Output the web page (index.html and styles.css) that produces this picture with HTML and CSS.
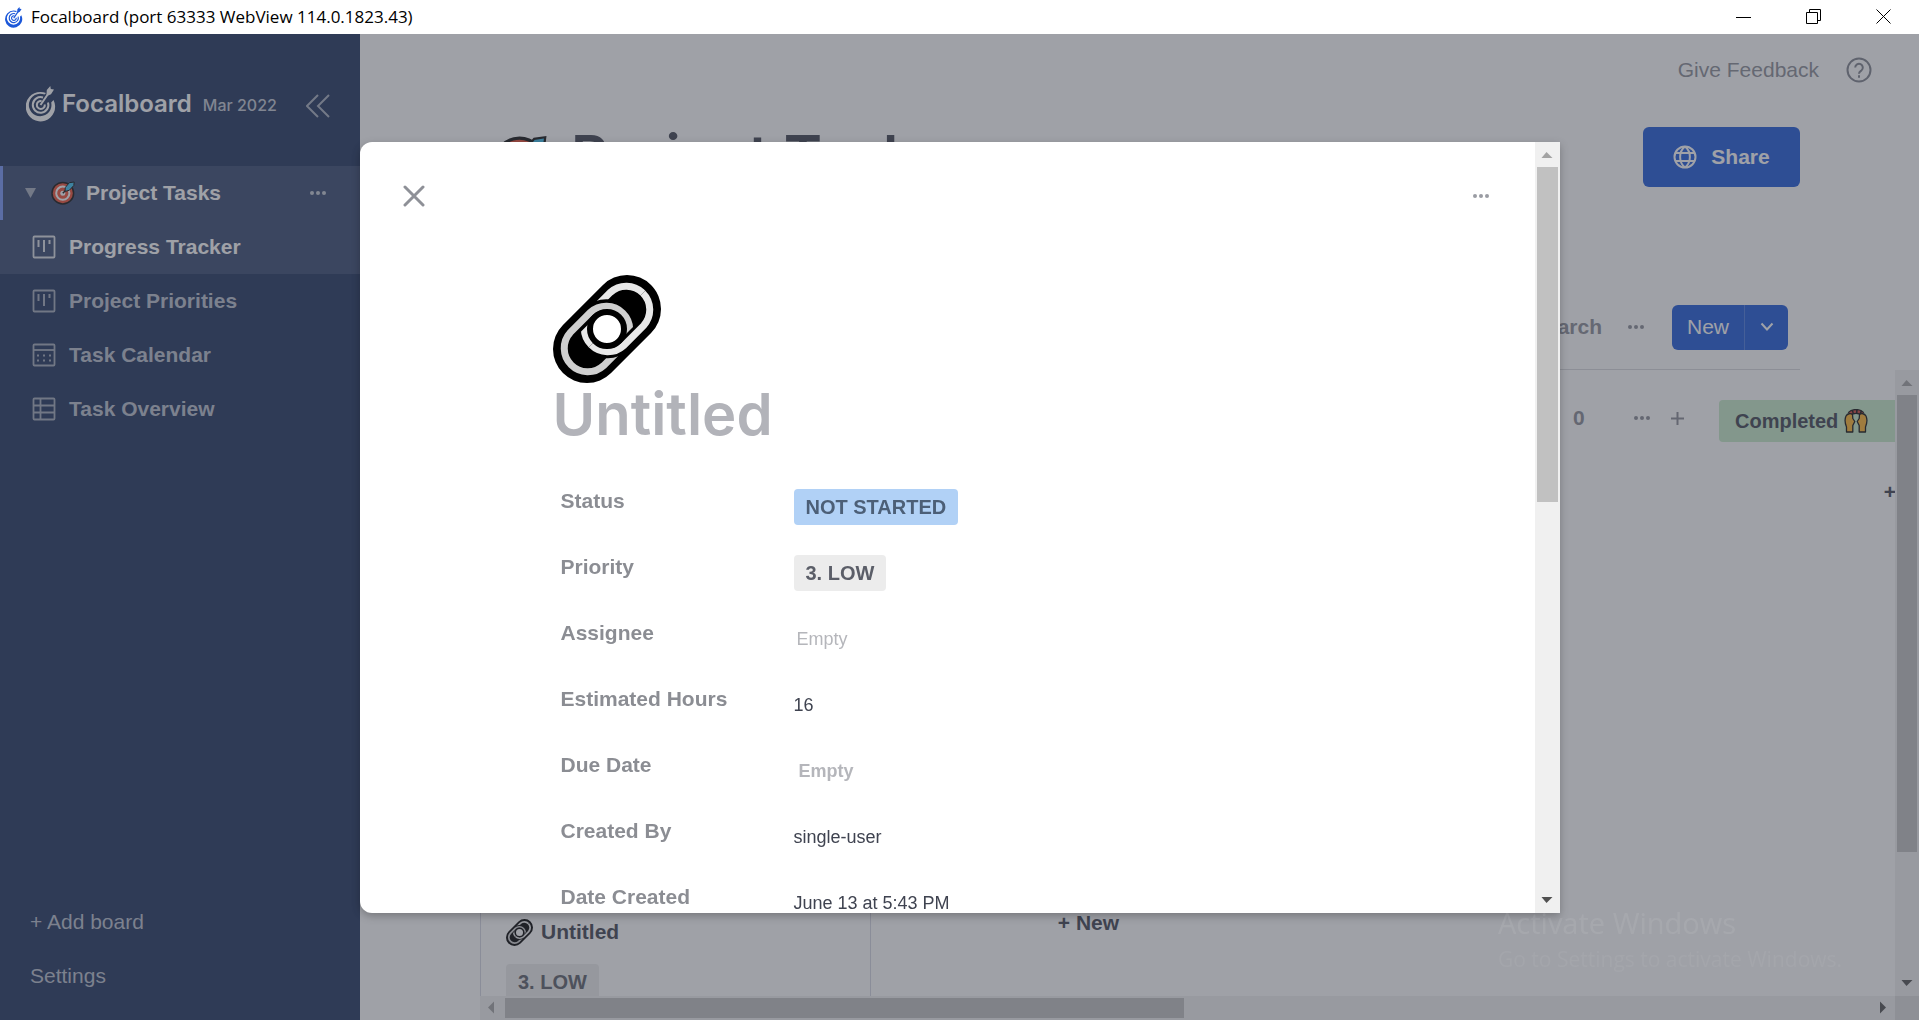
FILE: index.html
```html
<!DOCTYPE html>
<html lang="en">
<head>
<meta charset="utf-8">
<title>Focalboard</title>
<link rel="stylesheet" href="styles.css">
</head>
<body>
<svg class="sprite" aria-hidden="true">
  <defs>
    <symbol id="goal" viewBox="0 0 30 36">
      <path fill="currentColor" fill-rule="evenodd" d="M14.500 6A14.700 14.700 0 1 0 27.500 14L25.200 16.500A11.300 11.300 0 1 1 18.500 8.500L20 7A14.700 14.700 0 0 0 14.500 6z"/>
      <path fill="none" stroke="currentColor" stroke-width="2" d="M17 11.500A7.800 7.800 0 1 0 22 16.500"/>
      <path fill="none" stroke="currentColor" stroke-width="2" d="M15.500 15A4 4 0 1 0 18.800 18.500M14.500 19 22 8"/>
      <path fill="currentColor" d="M20.500 8.500 20.800 4 24.300 0 24.800 3 28 3.500 25 8.200 21.500 9.800z"/>
    </symbol>
    <symbol id="target" viewBox="0 0 24 24">
      <circle cx="11.800" cy="12.200" r="10.800" fill="#ee4f35" stroke="#111" stroke-width="1.500"/>
      <circle cx="11.800" cy="12.200" r="6.600" fill="none" stroke="#fff" stroke-width="2"/>
      <circle cx="11.800" cy="12.200" r="2.500" fill="#fff"/>
      <path d="M11.800 12.200 17 7" stroke="#111" stroke-width="1.500"/>
      <path fill="#3cc0f0" stroke="#111" stroke-width="1" d="M14 9.800 14.300 6.500l4-4.800L23.200 1l-.4 3.500-4.500 4.800-3.300.9z"/>
    </symbol>
    <symbol id="chain" viewBox="0 0 108 108">
      <clipPath id="lower"><path d="M108 0V108H0z"/></clipPath>
      <path d="M34 74 74 34" stroke="#000" stroke-width="68" stroke-linecap="round"/>
      <path id="link" fill="none" stroke="#e8e8e8" stroke-width="7" d="M37.400 37.400 57.400 17.400A23.500 23.500 0 0 1 90.600 50.600L70.600 70.600A23.500 23.500 0 0 1 37.400 37.400z"/>
      <path fill="none" stroke="#000" stroke-width="14" d="M70.600 70.600 50.600 90.600A23.500 23.500 0 0 1 17.400 57.400L37.400 37.400A23.500 23.500 0 0 1 70.600 70.600z"/>
      <path fill="none" stroke="#cfcfcf" stroke-width="7" d="M70.600 70.600 50.600 90.600A23.500 23.500 0 0 1 17.400 57.400L37.400 37.400A23.500 23.500 0 0 1 70.600 70.600z"/>
      <g clip-path="url(#lower)">
        <path fill="none" stroke="#000" stroke-width="13" d="M37.400 37.400 57.400 17.400A23.500 23.500 0 0 1 90.600 50.600L70.600 70.600A23.500 23.500 0 0 1 37.400 37.400z"/>
        <use href="#link"/>
      </g>
      <circle cx="54" cy="54" r="17" fill="#fff" stroke="#000" stroke-width="6"/>
    </symbol>
    <symbol id="hands" viewBox="0 0 24 24">
      <path fill="none" stroke="#111" stroke-width="5" d="M5.500 5C9 1.500 15 1.500 18.500 5"/>
      <path fill="none" stroke="#d0453c" stroke-width="2.500" stroke-dasharray="2.500 1.500" d="M6 4.500C9 1.800 15 1.800 18 4.500"/>
      <path fill="#ffb52e" stroke="#111" stroke-width="1.300" stroke-linejoin="round" d="M2.500 23V18C1 14.500.7 10 2 7 3.500 4.500 6.500 4 8.500 5.500L8.800 9.500l2 3-2 4V23zM21.500 23V18C23 14.500 23.300 10 22 7 20.500 4.500 17.500 4 15.500 5.500L15.200 9.500l-2 3 2 4V23z"/>
    </symbol>
    <symbol id="board" viewBox="0 0 24 24">
      <rect x="1.500" y="1.500" width="21" height="21" rx="1" fill="none" stroke="currentColor" stroke-width="1.800"/>
      <path stroke="currentColor" stroke-width="2" d="M6.500 5v7M12 5v12M17.500 5v4"/>
    </symbol>
    <symbol id="calendar" viewBox="0 0 24 24">
      <rect x="1.500" y="1.500" width="21" height="21" rx="1" fill="none" stroke="currentColor" stroke-width="1.800"/>
      <path stroke="currentColor" stroke-width="1.800" d="M1.500 7h21"/>
      <path stroke="currentColor" stroke-width="2" stroke-dasharray="2 4" d="M5 12.500h14M5 17.500h14"/>
    </symbol>
    <symbol id="table" viewBox="0 0 24 24">
      <rect x="1.500" y="1.500" width="21" height="21" rx="1" fill="none" stroke="currentColor" stroke-width="1.800"/>
      <path fill="none" stroke="currentColor" stroke-width="1.800" d="M1.500 8.500h21M1.500 15.500h21M8.500 1.500v21"/>
    </symbol>
    <symbol id="dots" viewBox="0 0 18 6">
      <g fill="currentColor"><circle cx="3" cy="3" r="2"/><circle cx="9" cy="3" r="2"/><circle cx="15" cy="3" r="2"/></g>
    </symbol>
  </defs>
</svg>

<header class="titlebar">
  <svg class="app-icon"><use href="#goal"/></svg>
  <span class="window-title">Focalboard (port 63333 WebView 114.0.1823.43)</span>
  <button class="win-btn" aria-label="Minimize"><svg viewBox="0 0 16 16"><path d="M0 8.500h15"/></svg></button>
  <button class="win-btn" aria-label="Restore"><svg viewBox="0 0 16 16"><path d="M.5 3.500h11v11H.5zM3.500 3.500v-3h11v11h-3"/></svg></button>
  <button class="win-btn" aria-label="Close window"><svg viewBox="0 0 16 16"><path d="M.5.500l14 14M14.500.500l-14 14"/></svg></button>
</header>

<div class="app">
  <nav class="sidebar">
    <div class="brand">
      <svg class="brand-icon"><use href="#goal"/></svg>
      <span class="brand-name">Focalboard</span>
      <span class="version">Mar 2022</span>
      <button class="plain collapse" aria-label="Hide sidebar"><svg viewBox="0 0 24 24"><path d="M12 1 1 12l11 11M23 1 12 12l11 11"/></svg></button>
    </div>
    <a class="nav-row group active" href="#">
      <svg class="caret" viewBox="0 0 11 10"><path d="M0 0h11L5.500 10z"/></svg>
      <svg class="emoji"><use href="#target"/></svg>
      <span>Project Tasks</span>
      <svg class="dots"><use href="#dots"/></svg>
    </a>
    <a class="nav-row view active" href="#"><svg><use href="#board"/></svg><span>Progress Tracker</span></a>
    <a class="nav-row view" href="#"><svg><use href="#board"/></svg><span>Project Priorities</span></a>
    <a class="nav-row view" href="#"><svg><use href="#calendar"/></svg><span>Task Calendar</span></a>
    <a class="nav-row view" href="#"><svg><use href="#table"/></svg><span>Task Overview</span></a>
    <div class="sidebar-foot">
      <button class="plain foot-btn">+ Add board</button>
      <button class="plain foot-btn">Settings</button>
    </div>
  </nav>

  <main class="main">
    <div class="topbar">
      <a class="feedback" href="#">Give Feedback</a>
      <button class="plain help" aria-label="Help"><svg viewBox="0 0 26 26"><circle cx="13" cy="13" r="11.500"/><path d="M9.200 10.500a3.800 3.800 0 1 1 6.200 3c-1.500 1.200-2.400 1.700-2.400 3.200"/><path d="M13 18.200v2.600"/></svg></button>
    </div>
    <div class="title-row">
      <svg class="board-emoji"><use href="#target"/></svg>
      <h1>Project Tasks</h1>
      <button class="primary share"><svg viewBox="0 0 24 24"><circle cx="12" cy="12" r="10.500"/><path d="M12 1.500c-6.500 5-6.500 16 0 21M12 1.500c6.500 5 6.500 16 0 21M2.500 8h19M2.500 16h19"/></svg>Share</button>
    </div>
    <div class="view-row">
      <button class="plain search">Search</button>
      <button class="plain" aria-label="View options"><svg class="dots"><use href="#dots"/></svg></button>
      <div class="split">
        <button class="primary new">New</button>
        <button class="primary arrow" aria-label="New from template"><svg viewBox="0 0 14 10"><path d="M1.500 1.500 7 7.500l5.500-6"/></svg></button>
      </div>
    </div>
    <div class="board">
      <div class="columns">
        <section class="column">
          <div class="card">
            <div class="card-title"><svg><use href="#chain"/></svg>Untitled</div>
            <span class="tag gray">3. LOW</span>
          </div>
        </section>
        <section class="column late">
          <button class="plain add-card">+ New</button>
        </section>
        <section class="column">
          <div class="column-head">
            <span class="count">0</span>
            <button class="plain" aria-label="Column options"><svg class="dots"><use href="#dots"/></svg></button>
            <button class="plain" aria-label="Add a card"><svg class="plus" viewBox="0 0 13 13"><path d="M6.500 0v13M0 6.500h13"/></svg></button>
          </div>
        </section>
        <section class="column">
          <div class="column-head"><span class="tag green">Completed <svg><use href="#hands"/></svg></span></div>
          <button class="plain add-card">+ New</button>
        </section>
      </div>
      <div class="scroll vertical" aria-hidden="true"><i class="tri up"></i><b class="board-thumb"></b><i class="tri down"></i></div>
      <div class="scroll horizontal" aria-hidden="true"><i class="tri left"></i><b class="wide-thumb"></b><i class="tri right"></i></div>
      <div class="corner"></div>
    </div>
  </main>
</div>

<div class="backdrop">
  <div class="dialog" role="dialog" aria-label="Card">
    <div class="dialog-body">
      <div class="toolbar">
        <button class="plain" aria-label="Close dialog"><svg class="cross" viewBox="0 0 22 22"><path d="M2 2l18 18M20 2 2 20"/></svg></button>
        <button class="plain" aria-label="Card options"><svg class="dots"><use href="#dots"/></svg></button>
      </div>
      <div class="card-detail">
        <svg class="card-icon"><use href="#chain"/></svg>
        <input class="card-name" type="text" placeholder="Untitled" aria-label="Card name">
        <div class="props">
          <div class="prop"><span class="label">Status</span><button class="plain value"><span class="tag blue">NOT STARTED</span></button></div>
          <div class="prop"><span class="label">Priority</span><button class="plain value"><span class="tag gray">3. LOW</span></button></div>
          <div class="prop"><span class="label">Assignee</span><button class="plain value empty">Empty</button></div>
          <div class="prop"><label class="label" for="hours">Estimated Hours</label><input class="value" id="hours" type="text" value="16"></div>
          <div class="prop"><span class="label">Due Date</span><button class="plain value empty strong">Empty</button></div>
          <div class="prop"><span class="label">Created By</span><span class="value">single-user</span></div>
          <div class="prop"><span class="label">Date Created</span><span class="value">June 13 at 5:43 PM</span></div>
        </div>
      </div>
    </div>
    <div class="scroll vertical light" aria-hidden="true"><i class="tri up"></i><b class="dialog-thumb"></b><i class="tri down"></i></div>
  </div>
</div>

<div class="watermark"><p class="wm-title">Activate Windows</p><p>Go to Settings to activate Windows.</p></div>
</body>
</html>
```
FILE: styles.css
```css
* { box-sizing: border-box; }
body {
  margin: 0;
  height: 100vh;
  display: flex;
  flex-direction: column;
  overflow: hidden;
  font-family: "Liberation Sans", Arial, sans-serif;
  font-size: 21px;
  line-height: 30px;
  color: #3f4350;
  background: #fff;
}
svg { display: block; flex: none; }
a { color: inherit; text-decoration: none; }
button, input { font: inherit; color: inherit; }
.sprite { position: absolute; width: 0; height: 0; }
.plain { padding: 0; border: 0; background: none; }
.dots { width: 18px; height: 6px; }

/* Window title bar */
.titlebar { display: flex; align-items: center; flex: none; height: 34px; padding-left: 5px; background: #fff; color: #000; }
.app-icon { width: 18px; height: 21px; color: #1c58d9; }
.window-title { flex: 1; padding-left: 8px; font-family: "Open Sans", sans-serif; font-size: 17px; }
.win-btn { width: 70px; height: 34px; padding: 0; border: 0; background: none; display: grid; place-items: center; }
.win-btn svg { width: 16px; height: 16px; fill: none; stroke: #000; }

/* Application shell */
.app { flex: 1; min-height: 0; display: flex; }
.sidebar { width: 360px; flex: none; display: flex; flex-direction: column; background: #1e325c; color: #fff; }
.brand { display: flex; align-items: center; height: 132px; padding: 7px 30px 0 26px; font-family: Inter, sans-serif; }
.brand-icon { width: 30px; height: 36px; }
.brand-name { padding-left: 6px; font-size: 24px; font-weight: 600; }
.version { flex: 1; padding: 2px 0 0 11px; font-size: 16px; font-weight: 500; color: #c0c6d2; }
.collapse { padding-top: 4px; }
.collapse svg { width: 24px; height: 24px; fill: none; stroke: #a6aebe; stroke-width: 2; }
.nav-row { display: flex; align-items: center; height: 54px; font-weight: 700; color: #b8bfcc; }
.nav-row.active { background: #374970; color: #fff; }
.group { padding: 0 33px 0 22px; border-left: 3px solid #7797f8; }
.group span { flex: 1; padding-left: 11px; }
.group .dots { color: #c4cad4; }
.caret { width: 11px; height: 10px; fill: #a6aebe; }
.emoji { width: 24px; height: 24px; margin-left: 15px; }
.view { padding-left: 32px; gap: 13px; }
.view svg { width: 24px; height: 24px; color: #a3abba; }
.view.active svg { color: #dde0e6; }
.sidebar-foot { margin-top: auto; padding-bottom: 17px; display: flex; flex-direction: column; }
.foot-btn { height: 54px; padding-left: 30px; text-align: left; color: #b8bfcc; }

.main { flex: 1; min-width: 0; display: flex; flex-direction: column; }
.topbar { display: flex; justify-content: flex-end; align-items: center; gap: 27px; height: 72px; padding-right: 47px; color: #8a8c95; }
.help svg { width: 26px; height: 26px; fill: none; stroke: #7f828c; stroke-width: 2; }
.title-row { display: flex; height: 81px; padding: 21px 119px 0 120px; }
.board-emoji { width: 54px; height: 54px; margin: 8px 0 0 13px; }
h1 { flex: 1; margin: 0; padding-left: 24px; font-family: Inter, sans-serif; font-size: 58px; font-weight: 600; line-height: 58px; }
.primary { border: 0; background: #1c58d9; color: #fff; display: flex; align-items: center; justify-content: center; }
.share { width: 157px; height: 60px; gap: 14px; border-radius: 6px; font-weight: 700; }
.share svg { width: 24px; height: 24px; fill: none; stroke: #fff; stroke-width: 2; }
.view-row { display: flex; align-items: center; justify-content: flex-end; margin: 118px 119px 0 120px; height: 65px; padding-bottom: 20px; border-bottom: 1px solid #d8d9dc; color: #8b8d96; }
.search { padding-right: 25px; font-weight: 700; }
.split { display: flex; margin: 0 12px 0 27px; border-radius: 6px; overflow: hidden; }
.new { width: 73px; height: 45px; border-right: 1px solid #4a7be0; }
.arrow { width: 43px; height: 45px; }
.arrow svg { width: 14px; height: 10px; fill: none; stroke: #fff; stroke-width: 2; }

/* Kanban */
.board { flex: 1; min-height: 0; margin-left: 120px; display: grid; grid-template: minmax(0, 1fr) 24px / minmax(0, 1fr) 24px; }
.columns { display: grid; grid-template-columns: repeat(4, 391px); gap: 22px; overflow: hidden; }
.column { padding-top: 30px; display: flex; flex-direction: column; min-height: 0; }
.column-head { display: flex; align-items: center; justify-content: flex-end; height: 42px; flex: none; color: #898b94; }
.column-head .plain { margin: -6px 13px 0 0; }
.column-head .dots { margin-right: 7px; }
.plus { width: 13px; height: 13px; fill: none; stroke: #898b94; stroke-width: 2; }
.count { width: 60px; margin-top: -6px; font-weight: 700; }
.tag { display: inline-flex; align-items: center; height: 36px; padding: 0 12px; border-radius: 4px; font-size: 20px; font-weight: 700; color: #5b5e68; }
.gray { background: #ececec; }
.blue { background: #b1d1f6; color: #4c5f77; }
.green { flex: 1; height: 42px; padding-left: 16px; background: #c6ebc8; color: #3f4350; }
.green svg { width: 24px; height: 24px; margin-left: 6px; }
.add-card { align-self: center; height: 30px; margin-top: 35px; font-weight: 700; }
.late { padding-top: 503px; }
.card { flex: none; margin-top: 480px; padding: 36px 24px 0 25px; height: 200px; border: 1px solid #d5d6e2; }
.card-title { display: flex; align-items: center; gap: 8px; padding-bottom: 17px; font-weight: 700; }
.card-title svg { width: 27px; height: 27px; }

/* Scroll bars */
.scroll { display: flex; align-items: center; background: #f0f0f0; }
.vertical { flex-direction: column; width: 24px; }
.scroll b { background: #c1c1c1; }
.tri { width: 25px; height: 25px; flex: none; background: #505050; }
.up { clip-path: polygon(7px 16px, 18px 16px, 12px 10px); background: #a3a3a3; }
.down { clip-path: polygon(7px 9px, 18px 9px, 12px 15px); margin-top: auto; }
.left { clip-path: polygon(8px 12px, 14px 6px, 14px 18px); background: #a3a3a3; }
.right { clip-path: polygon(10px 6px, 10px 18px, 16px 12px); margin-left: auto; }
.board-thumb { width: 20px; height: 73%; }
.wide-thumb { width: 48%; height: 20px; }
.dialog-thumb { width: 21px; height: 335px; }
.light { width: 25px; flex: none; }
.corner { background: #dcdcdc; }

/* Card dialog */
.backdrop { position: fixed; inset: 34px 0 0; padding: 108px 0 107px; display: flex; justify-content: center; background: rgba(63, 67, 80, .5); }
.dialog { width: 1200px; max-width: 100%; display: flex; overflow: hidden; background: #fff; border-radius: 12px 0 0 12px; box-shadow: 0 3px 8px rgba(0, 0, 0, .25); }
.dialog-body { flex: 1; min-width: 0; overflow: hidden; }
.toolbar { display: flex; justify-content: space-between; align-items: center; height: 107px; padding: 0 45px 0 43px; color: #9a9ca3; }
.cross { width: 22px; height: 22px; fill: none; stroke: #8e9097; stroke-width: 3; stroke-linecap: round; }
.card-detail { padding: 26px 193px 0; }
.card-icon { width: 108px; height: 108px; }
.card-name { display: block; width: 100%; height: 62px; padding: 0; border: 0; font-family: Inter, sans-serif; font-size: 58px; font-weight: 600; }
.card-name::placeholder { color: #b2b3b9; opacity: 1; }
.props { padding: 38px 8px 0; }
.prop { display: flex; height: 66px; }
.label { width: 233px; height: 36px; padding-top: 3px; font-weight: 700; color: #8b8d93; }
.value { height: 48px; display: flex; align-items: center; padding: 0; border: 0; font-size: 18px; }
.empty { padding-left: 3px; color: #b5b6bb; }
.strong { font-weight: 700; padding-left: 5px; }

.watermark { position: fixed; left: 1498px; top: 902px; font-family: "Open Sans", sans-serif; font-size: 21px; color: rgba(255, 255, 255, .05); pointer-events: none; }
.watermark p { margin: 0; line-height: 30px; }
.watermark .wm-title { font-size: 29px; line-height: 42px; color: rgba(255, 255, 255, .08); }
```
